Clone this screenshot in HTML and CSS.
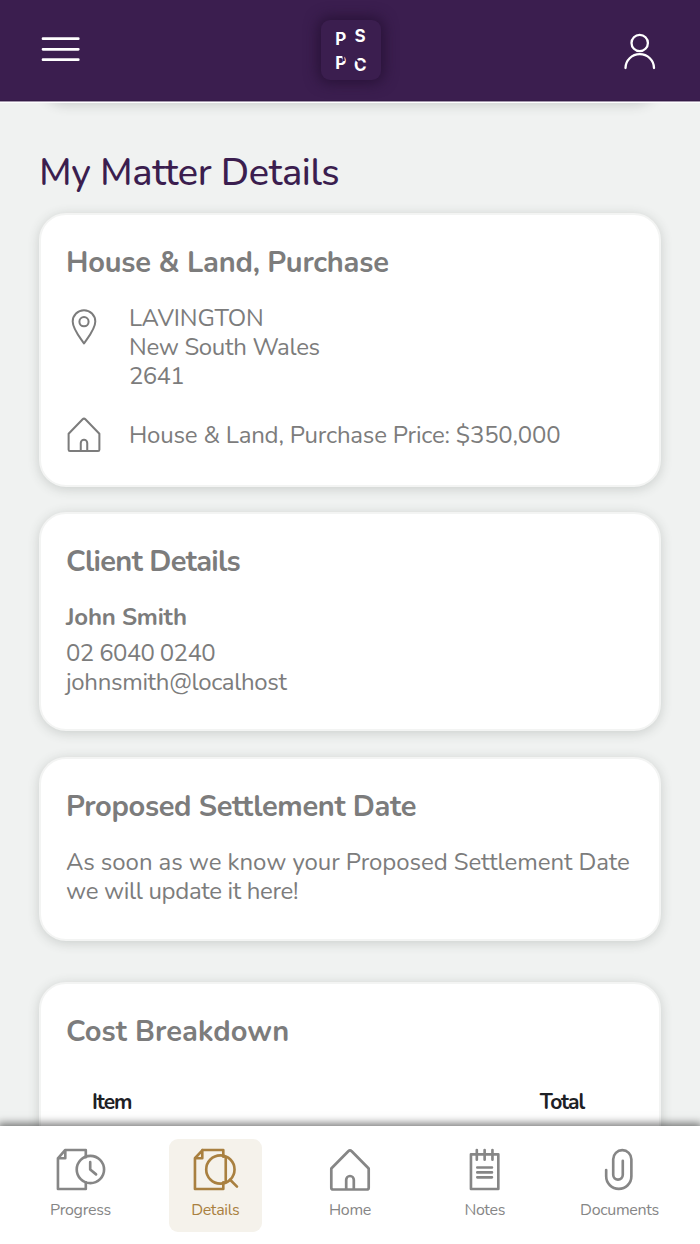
FILE: index.html
```html
<!DOCTYPE html>
<html lang="en">
<head>
<meta charset="utf-8">
<title>My Matter Details</title>
<link rel="stylesheet" href="styles.css">
</head>
<body>
<div class="app">
  <header class="topbar">
    <svg class="menu" viewBox="0 0 40 28"><path d="M3 3.700H38.300M3 14.300H38.300M3 24.700H38.300"/></svg>
    <div class="logo">
      <svg viewBox="0 0 60 60">
        <text x="14.200" y="24.500">P</text><text x="33.500" y="21.500">S</text>
        <text x="14.200" y="49">P</text><text x="33" y="51">C</text>
        <path d="M18.500 24L25 19.500M32 17.800H38.500M22 34.500L23 41M32 37L39.500 43.500"/>
      </svg>
    </div>
    <svg class="user" viewBox="0 0 34 38"><circle cx="16.700" cy="11" r="8.200"/><path d="M2.500 36A14.200 13.800 0 0 1 31 36"/></svg>
  </header>
  <main class="content">
    <div class="card previous"></div>
    <h1>My Matter Details</h1>
    <section class="card matter">
      <h2 class="snug-2">House &amp; Land, Purchase</h2>
      <div class="row address">
        <svg class="pin" viewBox="0 0 26 36"><path d="M13 34.500C9 28.500 1.700 20 1.700 12.500A11.300 11.300 0 0 1 24.300 12.500C24.300 20 17 28.500 13 34.500Z"/><circle cx="13" cy="12.700" r="4.600"/></svg>
        <p><span class="snug-1">LAVINGTON</span><br><span class="snug-3">New South Wales</span><br><span class="snug-4">2641</span></p>
      </div>
      <div class="row price">
        <svg class="house" viewBox="0 0 42 43"><path d="M2 20.500L19.300 2.700Q21 1 22.700 2.700L40 20.500V40.200Q40 41.800 38.400 41.800H3.600Q2 41.800 2 40.200ZM17 41V32A4 4 0 0 1 25 32V41"/></svg>
        <p class="snug-2">House &amp; Land, Purchase Price: $350,000</p>
      </div>
    </section>
    <section class="card client">
      <h2 class="snug-5">Client Details</h2>
      <h3 class="snug-2">John Smith</h3>
      <p><span class="snug-4">02 6040 0240</span><br><span class="snug-3">johnsmith@localhost</span></p>
    </section>
    <section class="card settlement">
      <h2 class="snug-3">Proposed Settlement Date</h2>
      <p>As soon as we know your Proposed Settlement Date<br><span class="snug-3">we will update it here!</span></p>
    </section>
    <section class="card costs">
      <h2 class="wide">Cost Breakdown</h2>
      <div class="table-head"><span>Item</span><span>Total</span></div>
    </section>
  </main>
  <nav class="tabs">
    <a class="tab"><svg viewBox="0 0 50 44"><path d="M30.500 9.500V2H9.500L2 10.500V42H30.500V35M2 10.500H9.500V2"/><circle cx="35.200" cy="22" r="14"/><path d="M35 14.500V22L41 27"/></svg><span class="snug-3">Progress</span></a>
    <a class="tab active"><svg viewBox="0 0 46 44"><path d="M31 9V2H10L2 10.500V42H31V35M2 10.500H9.500V2M33.500 9.500V34.500M38 32.500L45 39.500"/><circle cx="28" cy="22" r="14.500"/></svg><span class="snug-3">Details</span></a>
    <a class="tab"><svg viewBox="0 0 42 43"><path d="M2.300 20.500L19.300 3.200Q21 1.500 22.700 3.200L39.700 20.500V39.700Q39.700 41.500 37.900 41.500H4.100Q2.300 41.500 2.300 39.700ZM17.200 41V31.800A3.800 3.800 0 0 1 24.800 31.800V41"/></svg><span class="snug-3">Home</span></a>
    <a class="tab"><svg viewBox="0 0 32 44"><path d="M2 6.500H30V42H2ZM8 2V12M16 2V12M24 2V12M8.500 20H23.500M8.500 25H23.500M8.500 30H23.500"/></svg><span class="snug-3">Notes</span></a>
    <a class="tab"><svg viewBox="0 0 30 44"><path d="M1.200 22.500V29A12.900 12.900 0 0 0 27 29V11.500A9.300 9.300 0 0 0 8.400 11.500V27.500A4.900 4.900 0 0 0 18.200 27.500V13"/></svg><span class="snug-3">Documents</span></a>
  </nav>
</div>
</body>
</html>
```

FILE: styles.css
```css
* { box-sizing: border-box; }
body { margin: 0; font-family: Nunito, Lato, sans-serif; color: #7c7c7c; background: #f0f2f1; }
svg { display: block; overflow: visible; fill: none; stroke: currentColor; stroke-linecap: round; stroke-linejoin: round; }
.app { height: 1244px; display: flex; flex-direction: column; overflow: hidden; }
.topbar { height: 101px; flex: none; z-index: 2; background: #3b1e4f; border-bottom: 1px solid #341a46; box-shadow: 0 1px 0 #a598ae, 0 2px 0 #fff; color: #fff; padding: 0 40px; display: flex; justify-content: space-between; }
.menu { width: 40px; height: 28px; margin-top: 35px; stroke-width: 2.7; }
.logo { width: 60px; height: 60px; margin: 20px 2px 0 0; border-radius: 9px; box-shadow: 0 0 14px 3px #281237; background: #3b1e4f; }
.logo text { font-family: Inter, sans-serif; font-size: 17px; font-weight: 700; fill: #fff; stroke: none; }
.logo path { stroke: #3b1e4f; stroke-width: 1.800; stroke-linecap: butt; }
.user { width: 34px; height: 38px; margin: 32px 3px 0 0; stroke-width: 2.300; }
.content { flex: 1; min-height: 0; overflow: hidden; padding: 0 39px; display: flex; flex-direction: column; }
.card { flex: none; background: #fff; border: 2px solid #f3f4f3; border-radius: 27px; padding: 0 25px; box-shadow: 0 2px 12px rgba(50, 60, 55, .2); margin-bottom: 26px; }
.previous { height: 60px; margin-top: -58px; margin-bottom: 0; }
h1, h2, h3, p { margin: 0; white-space: nowrap; }
h1 { font-size: 38px; line-height: 48px; margin: 46px 0 16px; color: #3b1e4f; font-weight: 500; letter-spacing: -.37px; }
h2 { font-size: 29px; line-height: 36px; font-weight: 680; margin-top: 30px; }
h3 { font-size: 24px; line-height: 29px; font-weight: 680; }
p { font-size: 24px; line-height: 28.800px; font-weight: 370; letter-spacing: -.07px; }
.snug-1 { letter-spacing: -.15px; }
.snug-2 { letter-spacing: -.2px; }
.snug-3 { letter-spacing: -.33px; }
.snug-4 { letter-spacing: -.62px; }
.snug-5 { letter-spacing: -.68px; }
.wide { letter-spacing: .1px; }
.matter { height: 274px; margin-bottom: 25px; }
.row { display: flex; }
.row svg { flex: none; stroke-width: 2; }
.address { margin-top: 23px; }
.pin { width: 26px; height: 36px; margin: 5px 32px 0 5px; }
.price { margin-top: 27px; align-items: center; }
.price p { padding-top: 2px; }
.row .house { width: 34px; height: 35px; margin: 0 28px 0 1px; stroke-width: 2.500; }
.client { height: 219px; }
.client h3 { margin: 23px 0 7px; }
.settlement { height: 184px; margin-bottom: 41px; }
.settlement p { margin-top: 23px; }
.costs { height: 300px; margin-bottom: 0; }
.table-head { display: flex; justify-content: space-between; margin-top: 38px; padding: 0 50px 0 26px; font-size: 21px; line-height: 28px; font-weight: 700; letter-spacing: -1.1px; color: #1d2025; }
.tabs { flex: none; height: 118px; z-index: 2; background: #fff; box-shadow: 0 -1px 8px 2px rgba(0, 0, 0, .5); padding: 13px 34px 0; display: flex; justify-content: space-between; }
.tab { width: 93px; height: 93px; border-radius: 9px; display: flex; flex-direction: column; align-items: center; gap: 9px; padding-top: 9px; color: #868686; font-size: 16px; line-height: 20px; font-weight: 375; }
.tab svg { height: 43px; stroke-width: 2.700; }
.active { background: #f5f2eb; color: #a98040; }
```
